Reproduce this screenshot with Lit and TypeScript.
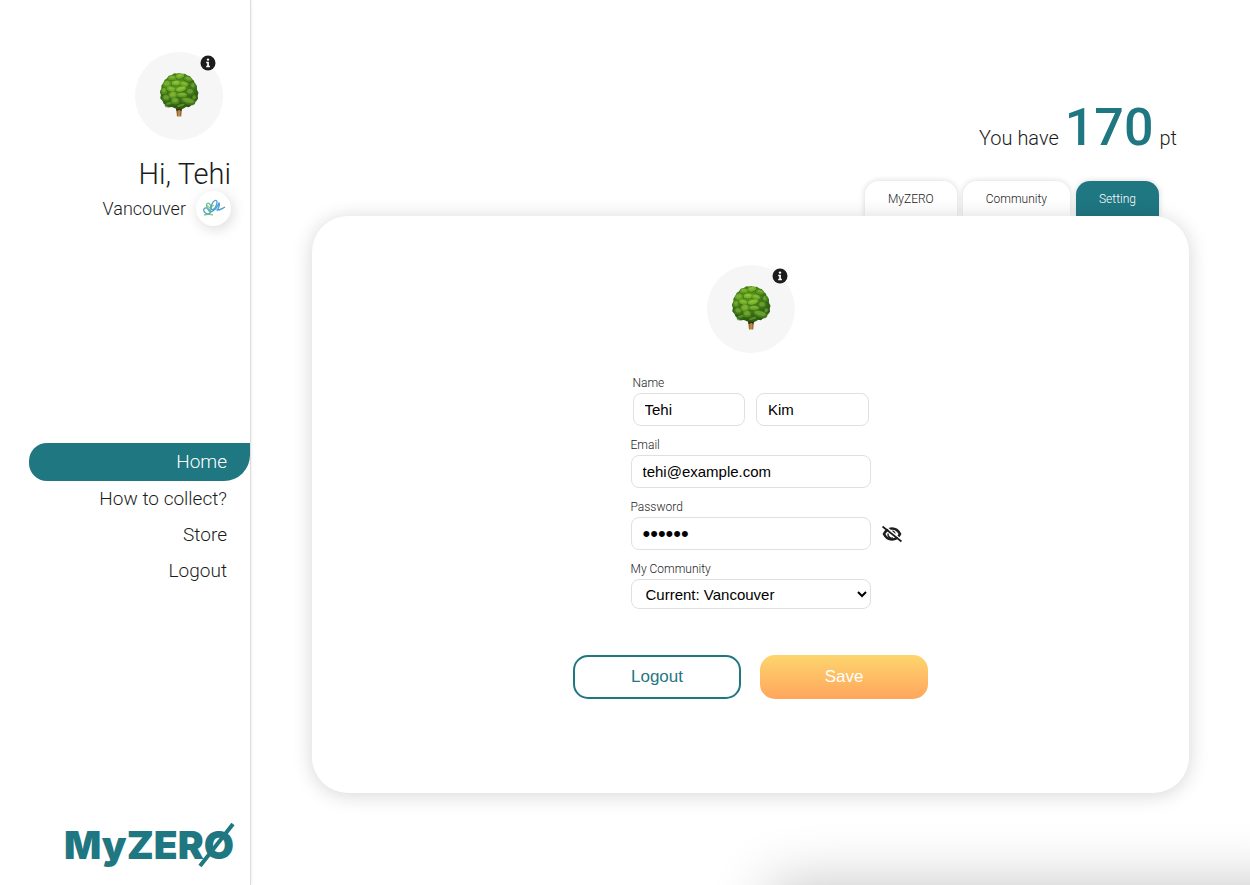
import { LitElement, html, css, svg } from "lit";
import { customElement, state } from "lit/decorators.js";

const leaves: [number, number, number, number, string][] = [
  [21, 4, 5, 3, "#7fba2c"], [13, 6, 5, 3, "#6ba628"], [29, 7, 5, 3, "#5f9a22"],
  [8, 12, 5, 4, "#62a022"], [17, 11, 5, 3, "#86c02f"], [25, 12, 5, 3, "#7ab32b"], [34, 14, 4, 4, "#44801a"],
  [5, 19, 4, 4, "#57921f"], [12, 17, 5, 3, "#7db62c"], [22, 17, 6, 3, "#86c032"], [31, 20, 5, 4, "#46801a"],
  [7, 26, 5, 4, "#47811a"], [14, 23, 5, 4, "#6aa426"], [23, 23, 6, 3, "#6ba426"], [35, 26, 4, 4, "#326513"],
  [10, 32, 5, 3, "#356a14"], [16, 29, 5, 4, "#528f1e"], [29, 29, 8, 4, "#4a821d"], [22, 34, 6, 3, "#2f6012"],
];

@customElement("tree-avatar")
export class TreeAvatar extends LitElement {
  static styles = css`
    :host { display: block; position: relative; width: 88px; height: 88px; border-radius: 50%; background: #f6f6f6; }
    .tree { display: block; width: 40px; height: 46px; margin: 0 auto; padding-top: 20px; }
    .info { position: absolute; top: 3px; right: 7px; width: 16px; height: 16px; padding: 0; border: 0; background: none; }
    .info svg { display: block; }
  `;
  render() {
    return html`
      <svg class="tree" viewBox="0 0 40 46" aria-label="Tree" role="img">
        <defs>
          <linearGradient id="trunk"><stop offset="0" stop-color="#5e3c12" /><stop offset=".5" stop-color="#c99a4b" /><stop offset="1" stop-color="#6a4416" /></linearGradient>
          <radialGradient id="leaf" cx=".45" cy=".3" r=".75"><stop offset="0" stop-color="#5d9f1f" /><stop offset="1" stop-color="#24500f" /></radialGradient>
        </defs>
        <path d="M17 34h6l-.8 10.500h-4.200z" fill="url(#trunk)" />
        <path d="M17 35h6l-.5 4-2-1-3 1z" fill="#35230c" />
        <path d="M20 1l3 1 3-.3 2 1.500 3 1 1.500 2.500 2.500 2 .8 3 2 2.500.2 3.500 1.500 3-.8 3.300.2 3-2.300 2-1.200 3-3 1-2.400 2.300-3-.5-3.500 2-3.500-1.200-3.500 1-3.500-1.600-3.500.3-1.800-2.500-3-1-1.200-3-2.300-2.500.7-3.300-1-3 1.500-3v-3.500l2.300-2.500.8-3 2.600-1.700 1.600-2.600 3-.6 2.500-1.800 3 .3z" fill="url(#leaf)" />
        ${leaves.map(([x, y, rx, ry, c], i) => svg`
          <g transform="rotate(${(i % 3) * 14 - 14} ${x} ${y})">
            <ellipse cx=${x} cy=${y + 0.6} rx=${rx - 0.4} ry=${ry - 0.3} fill="#2c5c11" opacity=".5" />
            <ellipse cx=${x} cy=${y} rx=${rx - 0.6} ry=${ry - 0.5} fill=${c} opacity=".8" />
            <ellipse cx=${x} cy=${y - 0.7} rx=${rx - 2.2} ry=${ry - 1.8} fill="#b5df52" opacity=".35" />
          </g>`)}
      </svg>
      <button class="info" aria-label="Information">
        <svg width="16" height="16" viewBox="0 0 16 16">
          <circle cx="8" cy="8" r="7.500" fill="#1c1c1c" />
          <circle cx="8" cy="4.600" r="1.200" fill="#fff" />
          <path d="M6.200 6.800h2.700v4h1v1.400H6.200v-1.400h1V8.200h-1z" fill="#fff" />
        </svg>
      </button>`;
  }
}

@customElement("app-root")
export class AppRoot extends LitElement {
  static styles = css`
    :host {
      display: flex; position: relative; min-height: 100vh; overflow: hidden; background: #fff;
      font: 300 19px/24px Roboto, "Liberation Sans", sans-serif; color: #1c1c1c;
    }
    * { box-sizing: border-box; }
    a { color: inherit; text-decoration: none; }
    button, input, select { font-family: "Liberation Sans", Arial, sans-serif; }
    .sidebar {
      flex: none; width: 251px; display: flex; flex-direction: column; justify-content: space-between;
      padding: 52px 0 12px; border-right: 1px solid #ddd; box-shadow: 0 0 3px rgba(0, 0, 0, .1);
    }
    .profile { display: flex; flex-direction: column; align-items: flex-end; padding-right: 19px; }
    .profile tree-avatar { margin-right: 8px; }
    .hello { margin: 17px 0 0; font-size: 29px; line-height: 34px; font-weight: 300; }
    .place { display: flex; align-items: center; gap: 10px; font-size: 18px; }
    .badge { display: flex; width: 35px; height: 35px; border-radius: 50%; background: #fff; box-shadow: 2px 3px 14px rgba(0, 0, 0, .15); }
    .badge svg { margin: auto; }
    nav { display: flex; flex-direction: column; padding: 0 0 16px 29px; text-align: right; }
    nav a { padding: 6px 23px 6px 0; }
    nav a.active { padding: 7px 23px 7px 0; background: #1f7782; color: #fff; border-radius: 18px 0 26px 18px; }
    .logo { align-self: flex-end; margin-right: 14px; }
    .logo svg { display: block; overflow: visible; }
    .logo text { font: 900 39px Inter, sans-serif; }
    main { flex: 1; min-width: 0; padding: 98px 61px 92px; }
    .points { display: flex; align-items: baseline; justify-content: flex-end; gap: 6px; margin: 0; padding-right: 12px; font-size: 20px; }
    .points strong { font-size: 52px; line-height: 60px; font-weight: 500; color: #1f7782; }
    .tabs { display: flex; justify-content: flex-end; gap: 6px; padding: 23px 30px 0 0; }
    .tabs a { padding: 10px 23px 9px; font-size: 12px; line-height: 16px; border-radius: 14px 14px 0 0; background: #fff; box-shadow: 0 0 6px rgba(0, 0, 0, .16); }
    .tabs a.active { background: #1f7782; color: #fff; }
    .card {
      position: relative; display: flex; flex-direction: column; align-items: center;
      padding: 49px 20px 94px; border-radius: 36px; background: #fff; box-shadow: 0 2px 20px rgba(0, 0, 0, .17);
    }
    .fields { display: grid; gap: 11px; width: 240px; margin: 22px 0 46px; }
    .field, .names { display: grid; gap: 2px; }
    .names { grid-template-columns: 1fr 1fr; column-gap: 11px; padding: 0 2px; }
    .names label { grid-column: 1 / -1; }
    label { font-size: 12px; line-height: 16px; }
    input, select { width: 100%; min-width: 0; height: 33px; border: 1px solid #e0e0e0; border-radius: 8px; background: #fff; color: #000; font-size: 15px; padding: 0 11px; }
    input[type="password"] { font-size: 22px; }
    select { height: 30px; padding: 0 0 0 10px; }
    .secret { display: flex; align-items: center; gap: 11px; }
    .secret input { flex: 0 0 100%; }
    .eye { flex: none; padding: 0; border: 0; background: none; }
    .eye svg { display: block; }
    .actions { display: flex; gap: 19px; }
    .actions button { width: 168px; height: 44px; border-radius: 15px; font-size: 17px; border: 2px solid #1f7782; background: #fff; color: #1f7782; }
    .actions .save { border: 0; background: linear-gradient(#fdd56e, #ffa55c); color: #fff; }
    .glow { position: absolute; left: 770px; right: -60px; top: 100%; height: 60px; box-shadow: 0 0 60px rgba(0, 0, 0, .24); pointer-events: none; }
  `;

  @state() private shown = false;

  render() {
    return html`
      <aside class="sidebar">
        <div class="profile">
          <tree-avatar></tree-avatar>
          <h1 class="hello">Hi, Tehi</h1>
          <div class="place">
            <span>Vancouver</span>
            <span class="badge">
              <svg width="24" height="20" viewBox="0 0 24 20" fill="none" stroke-width="1.300">
                <path d="M2 16l5-1 4 1M4 6l4 3M7 13c1-3 3-6 5-7" stroke="#8fcf6a" />
                <ellipse cx="5" cy="12" rx="3.600" ry="2.500" transform="rotate(35 5 12)" stroke="#4a9ed2" />
                <ellipse cx="7" cy="8" rx="2" ry="4" transform="rotate(-20 7 8)" stroke="#6cc08e" />
                <ellipse cx="12" cy="6" rx="2.200" ry="5" transform="rotate(25 12 6)" stroke="#4a9ed2" />
                <path d="M9 13c4-2 7-6 8-9 1 0 0 6-2 7 2 1 4-1 8-3" stroke="#4a9ed2" />
              </svg>
            </span>
          </div>
        </div>
        <nav>
          <a class="active" href="#home">Home</a>
          <a href="#collect">How to collect?</a>
          <a href="#store">Store</a>
          <a href="#logout">Logout</a>
        </nav>
        <a class="logo" href="#home">
          <svg width="172" height="52" viewBox="0 0 172 52" fill="#1f7782">
            <text x="0" y="38">MyZERO</text>
            <path d="M136 45L169 3" stroke="#1f7782" stroke-width="4" />
          </svg>
        </a>
      </aside>
      <main>
        <p class="points"><span>You have</span><strong>170</strong><span>pt</span></p>
        <div class="tabs">
          <a href="#myzero">MyZERO</a>
          <a href="#community">Community</a>
          <a class="active" href="#setting">Setting</a>
        </div>
        <form class="card" @submit=${(e: Event) => e.preventDefault()}>
          <tree-avatar></tree-avatar>
          <div class="fields">
            <div class="names">
              <label for="first">Name</label>
              <input id="first" value="Tehi" />
              <input id="last" aria-label="Last name" value="Kim" />
            </div>
            <div class="field">
              <label for="email">Email</label>
              <input id="email" type="email" value="tehi@example.com" />
            </div>
            <div class="field">
              <label for="password">Password</label>
              <div class="secret">
                <input id="password" type=${this.shown ? "text" : "password"} value="secret" />
                <button class="eye" type="button" aria-label="Show password" @click=${() => (this.shown = !this.shown)}>
                  <svg width="20" height="18" viewBox="0 0 20 18" fill="none" stroke="#1c1c1c">
                    <path d="M2 9c2-4 5-5.500 8-5.500s6 1.500 8 5.500c-2 4-5 5.500-8 5.500s-6-1.500-8-5.500z" stroke-width="2.600" />
                    <path d="M10 6.500a2.500 2.500 0 0 1 2.500 2.500" stroke-width="2" />
                    <path d="M6 8.500a4 4 0 0 0 5 4.500" stroke-width="1.400" />
                    <path d="M2 0L20 15.500" stroke="#fff" stroke-width="1.500" />
                    <path d="M.5 1.500L19.500 16.500" stroke-width="1.700" />
                  </svg>
                </button>
              </div>
            </div>
            <div class="field">
              <label for="community">My Community</label>
              <select id="community"><option>Current: Vancouver</option></select>
            </div>
          </div>
          <div class="actions">
            <button type="button">Logout</button>
            <button class="save" type="submit">Save</button>
          </div>
        </form>
      </main>
      <div class="glow"></div>`;
  }
}
